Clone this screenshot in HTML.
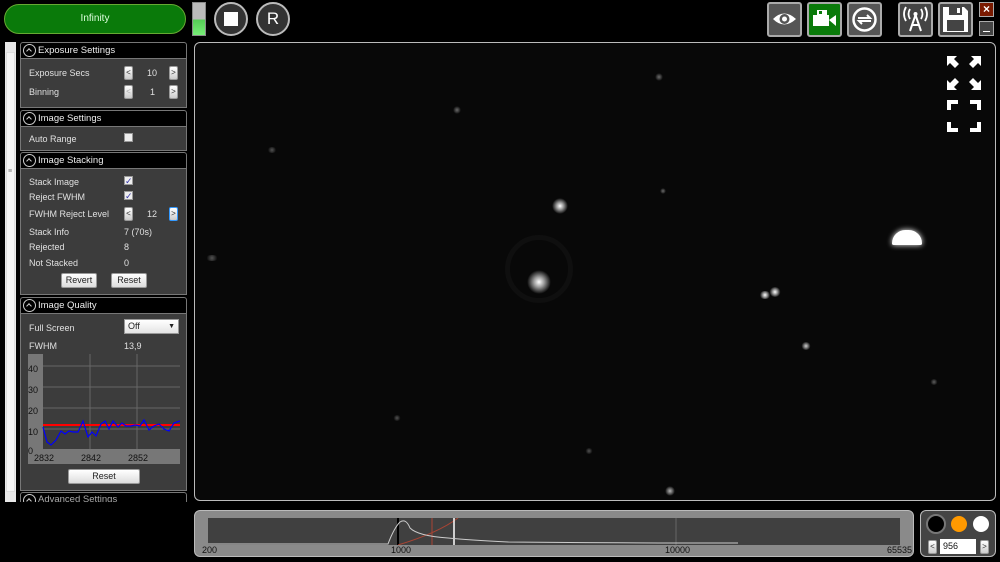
<!DOCTYPE html><html><head><style>
*{box-sizing:border-box;margin:0;padding:0}
body{width:1000px;height:562px;background:#000;position:relative;overflow:hidden;font-family:"Liberation Sans",sans-serif;font-size:9px;color:#ddd}
.a{position:absolute}
.hdr{position:absolute;left:20px;width:167px;height:17px;background:#000;border:1px solid #777;border-radius:3px 3px 0 0;color:#eee;font-size:9.5px;line-height:15px;padding-left:17px}
.hdr:before{content:"";position:absolute;left:2px;top:1px;width:11px;height:11px;border:1px solid #ccc;border-radius:50%}
.hdr:after{content:"";position:absolute;left:6px;top:6px;width:3px;height:3px;border-left:1px solid #ccc;border-top:1px solid #ccc;transform:rotate(45deg)}
.body{position:absolute;left:20px;width:167px;background:#3c3c3c;border:1px solid #777;border-top:none}
.l{position:absolute;left:8px;font-size:9px;color:#e0e0e0}
.v{position:absolute;font-size:9px;color:#e0e0e0}
.sb{position:absolute;width:9px;height:14px;background:linear-gradient(#fff,#ccc);border:1px solid #999;border-radius:2px;color:#333;font-size:8px;text-align:center;line-height:12px}
.cb{position:absolute;width:9px;height:9px;background:#eee;border:1px solid #999;color:#33a;font-size:9px;line-height:8px;text-align:center}
.btn{position:absolute;height:15px;background:linear-gradient(#fff,#ddd);border:1px solid #999;border-radius:2px;color:#222;font-size:9px;text-align:center;line-height:13px}
.tb{position:absolute;top:2px;width:35px;height:35px;background:#555;border:2px solid #aaa;border-radius:3px}
.star{position:absolute;border-radius:50%;background:radial-gradient(circle,#fff 0,rgba(255,255,255,.6) 30%,rgba(255,255,255,0) 70%)}
</style></head><body>
<div class="a" style="left:4px;top:4px;width:182px;height:30px;background:#0a7a0a;border:1px solid #6a3;border-radius:15px;text-align:center;line-height:28px;font-size:10px;color:#dfd">Infinity</div>
<div class="a" style="left:192px;top:2px;width:14px;height:34px;background:linear-gradient(#bbb 0,#bbb 52%,#5c5 52%,#7e7 100%);border:1px solid #888"></div>
<div class="a" style="left:214px;top:2px;width:34px;height:34px;border:2px solid #bbb;border-radius:50%;background:#333"><div class="a" style="left:8px;top:8px;width:14px;height:14px;background:#fff"></div></div>
<div class="a" style="left:256px;top:2px;width:34px;height:34px;border:2px solid #bbb;border-radius:50%;background:#333;color:#fff;font-size:17px;text-align:center;line-height:30px">R</div>
<div class="tb" style="left:767px"><svg width="31" height="31"><path d="M4 15Q15 4 27 15Q15 26 4 15Z" fill="#fff"/><circle cx="15.5" cy="15" r="5" fill="#555"/><circle cx="15.5" cy="15" r="2.5" fill="#fff"/></svg></div>
<div class="tb" style="left:807px;background:#0a7a0a"><svg width="31" height="31"><rect x="4" y="11" width="16" height="11" fill="#fff"/><rect x="8" y="6" width="10" height="5" fill="#fff"/><rect x="10" y="7" width="3" height="3" fill="#0a7a0a"/><path d="M20 16L27 11V22Z" fill="#fff"/></svg></div>
<div class="tb" style="left:847px"><svg width="31" height="31"><circle cx="15.5" cy="15.5" r="11" fill="none" stroke="#fff" stroke-width="2.5"/><path d="M9 14h12l-3-3M22 17H10l3 3" fill="none" stroke="#fff" stroke-width="2"/></svg></div>
<div class="tb" style="left:898px;background:#444"><svg width="31" height="31"><path d="M10 27L15.5 11L21 27M12 21h7" fill="none" stroke="#fff" stroke-width="2"/><circle cx="15.5" cy="10" r="2" fill="#fff"/><path d="M10 5Q7 10 10 15M21 5Q24 10 21 15M6 3Q2 10 6 17M25 3Q29 10 25 17" fill="none" stroke="#fff" stroke-width="1.8"/></svg></div>
<div class="tb" style="left:938px;background:#444"><svg width="31" height="31"><path d="M3 3H24L28 7V28H3Z" fill="#fff"/><rect x="9" y="3" width="13" height="8" fill="#444"/><rect x="17" y="4" width="3" height="5" fill="#fff"/><rect x="7" y="16" width="17" height="11" fill="#444"/></svg></div>
<div class="a" style="left:979px;top:2px;width:15px;height:15px;background:#7a1a00;border:1px solid #aaa;color:#fff;font-size:12px;font-weight:bold;text-align:center;line-height:13px">×</div>
<div class="a" style="left:979px;top:21px;width:15px;height:15px;background:#444;border:1px solid #aaa"><div class="a" style="left:3px;top:9px;width:7px;height:1px;background:#fff"></div></div>
<div class="a" style="left:5px;top:42px;width:11px;height:460px;background:#e8e8e8"><div class="a" style="left:1px;top:10px;width:9px;height:440px;background:#f4f4f4;border:1px solid #ddd"></div><div class="a" style="left:3px;top:126px;color:#777;font-size:7px">≡</div></div>
<div class="hdr" style="top:42px">Exposure Settings</div>
<div class="body" style="top:59px;height:49px">
<div class="l" style="top:9px">Exposure Secs</div><div class="sb" style="left:103px;top:7px">&lt;</div><div class="v" style="left:126px;top:9px">10</div><div class="sb" style="left:148px;top:7px">&gt;</div>
<div class="l" style="top:28px">Binning</div><div class="sb" style="left:103px;top:26px;color:#aaa">&lt;</div><div class="v" style="left:129px;top:28px">1</div><div class="sb" style="left:148px;top:26px">&gt;</div></div>
<div class="hdr" style="top:110px">Image Settings</div>
<div class="body" style="top:127px;height:24px"><div class="l" style="top:7px">Auto Range</div><div class="cb" style="left:103px;top:6px"></div></div>
<div class="hdr" style="top:152px">Image Stacking</div>
<div class="body" style="top:169px;height:126px">
<div class="l" style="top:8px">Stack Image</div><div class="cb" style="left:103px;top:7px">✓</div>
<div class="l" style="top:23px">Reject FWHM</div><div class="cb" style="left:103px;top:22px">✓</div>
<div class="l" style="top:40px">FWHM Reject Level</div><div class="sb" style="left:103px;top:38px">&lt;</div><div class="v" style="left:126px;top:40px">12</div><div class="sb" style="left:148px;top:38px;border-color:#39f">&gt;</div>
<div class="l" style="top:58px">Stack Info</div><div class="v" style="left:103px;top:58px">7 (70s)</div>
<div class="l" style="top:73px">Rejected</div><div class="v" style="left:103px;top:73px">8</div>
<div class="l" style="top:89px">Not Stacked</div><div class="v" style="left:103px;top:89px">0</div>
<div class="btn" style="left:40px;top:104px;width:36px">Revert</div><div class="btn" style="left:90px;top:104px;width:36px">Reset</div></div>
<div class="hdr" style="top:297px">Image Quality</div>
<div class="body" style="top:314px;height:177px">
<div class="l" style="top:9px">Full Screen</div>
<div class="a" style="left:103px;top:5px;width:55px;height:15px;background:linear-gradient(#fff,#e4e4e4);border:1px solid #999;color:#222;padding-left:3px;line-height:13px">Off<span style="position:absolute;right:3px;font-size:7px">▼</span></div>
<div class="l" style="top:27px">FWHM</div><div class="v" style="left:103px;top:27px">13,9</div>
<svg class="a" style="left:7px;top:40px" width="152" height="110"><rect x="0" y="0" width="152" height="110" fill="#3c3c3c"/><rect x="0" y="0" width="15" height="110" fill="#777"/><rect x="0" y="95" width="152" height="15" fill="#777"/>
<g stroke="#666" stroke-width="1"><line x1="15" y1="12" x2="152" y2="12"/><line x1="15" y1="33" x2="152" y2="33"/><line x1="15" y1="54" x2="152" y2="54"/><line x1="15" y1="75" x2="152" y2="75"/><line x1="62" y1="0" x2="62" y2="95"/><line x1="109" y1="0" x2="109" y2="95"/></g>
<line x1="15" y1="71" x2="152" y2="71" stroke="#f00" stroke-width="2"/>
<polyline fill="none" stroke="#00f" stroke-width="1.2" points="15,73 19,88 23,91 28,86 33,77 37,80 41,77 45,78 50,78 55,67 60,83 64,78 68,82 73,70 77,67 81,75 85,67 90,73 94,69 98,72 103,72 107,71 112,72 116,66 121,76 126,72 131,70 136,75 141,77 146,69 152,67"/>
<g fill="#111" font-size="9" font-family="Liberation Sans"><text x="0" y="18">40</text><text x="0" y="39">30</text><text x="0" y="60">20</text><text x="0" y="81">10</text><text x="0" y="100">0</text><text x="6" y="107">2832</text><text x="53" y="107">2842</text><text x="100" y="107">2852</text></g></svg>
<div class="btn" style="left:47px;top:155px;width:72px">Reset</div></div>
<div class="hdr" style="top:492px;height:12px;line-height:13px;color:#aaa">Advanced Settings</div>
<div class="a" style="left:0;top:502px;width:192px;height:60px;background:#000"></div>
<div class="a" style="left:194px;top:42px;width:802px;height:459px;background:#080808;border:1px solid #bbb;border-radius:6px;overflow:hidden">
<div class="a" style="left:310px;top:192px;width:68px;height:68px;border-radius:50%;border:5px solid rgba(255,255,255,.03)"></div>
<div class="star" style="left:332px;top:227px;width:24px;height:24px"></div>
<div class="star" style="left:357px;top:155px;width:16px;height:16px"></div>
<div class="a" style="left:697px;top:187px;width:30px;height:15px;background:#fff;border-radius:15px 15px 2px 2px;box-shadow:0 0 6px #fff"></div>
<div class="star" style="left:574px;top:244px;width:12px;height:10px"></div>
<div class="star" style="left:564px;top:248px;width:12px;height:8px"></div>
<div class="star" style="left:606px;top:299px;width:10px;height:8px;opacity:.8"></div>
<div class="star" style="left:470px;top:443px;width:10px;height:10px;opacity:.7"></div>
<div class="star" style="left:460px;top:30px;width:8px;height:8px;opacity:.4"></div>
<div class="star" style="left:258px;top:63px;width:8px;height:8px;opacity:.4"></div>
<div class="star" style="left:10px;top:212px;width:14px;height:6px;opacity:.3"></div>
<div class="star" style="left:72px;top:104px;width:10px;height:6px;opacity:.3"></div>
<div class="star" style="left:465px;top:145px;width:6px;height:6px;opacity:.4"></div>
<div class="star" style="left:735px;top:336px;width:8px;height:6px;opacity:.35"></div>
<div class="star" style="left:390px;top:405px;width:8px;height:6px;opacity:.3"></div>
<div class="star" style="left:198px;top:372px;width:8px;height:6px;opacity:.3"></div>
<svg class="a" style="left:751px;top:12px" width="36" height="78" fill="#fff"><path d="M1 1h10l-3 3 5 5-4 4-5-5-3 3z M35 1H25l3 3-5 5 4 4 5-5 3 3z M1 35h10l-3-3 5-5-4-4-5 5-3-3z M35 35H25l3-3-5-5 4-4 5 5 3-3z"/><path d="M1 45h11v4H5v6H1z M35 45H24v4h7v6h4z M1 77h11v-4H5v-6H1z M35 77H24v-4h7v-6h4z"/></svg>
</div>
<div class="a" style="left:194px;top:510px;width:720px;height:47px;background:#8a8a8a;border:1px solid #bbb;border-radius:6px">
<svg class="a" style="left:13px;top:7px" width="692" height="27"><rect width="692" height="27" fill="#404040"/><line x1="468" y1="0" x2="468" y2="27" stroke="#666"/><line x1="190" y1="0" x2="190" y2="27" stroke="#000" stroke-width="2"/><line x1="224" y1="0" x2="224" y2="27" stroke="#a43"/><path d="M190 27Q230 15 250 0" stroke="#a43" fill="none"/><line x1="246" y1="0" x2="246" y2="27" stroke="#fff" stroke-width="1.5"/><path d="M0 26H180Q186 10 192 4Q198 0 202 10Q210 18 240 20Q260 22 300 24Q400 25 530 25" stroke="#ccc" fill="none"/></svg>
<div class="a" style="left:7px;top:34px;color:#111;font-size:9px">200</div><div class="a" style="left:196px;top:34px;color:#111;font-size:9px">1000</div><div class="a" style="left:470px;top:34px;color:#111;font-size:9px">10000</div><div class="a" style="left:692px;top:34px;color:#111;font-size:9px">65535</div></div>
<div class="a" style="left:920px;top:510px;width:76px;height:47px;background:#444;border:1px solid #bbb;border-radius:6px">
<div class="a" style="left:5px;top:3px;width:20px;height:20px;border-radius:50%;background:#000;border:2px solid #777"></div>
<div class="a" style="left:30px;top:5px;width:16px;height:16px;border-radius:50%;background:#f90"></div>
<div class="a" style="left:52px;top:5px;width:16px;height:16px;border-radius:50%;background:#fff"></div>
<div class="sb" style="left:7px;top:29px">&lt;</div><div class="a" style="left:19px;top:28px;width:36px;height:15px;background:#fff;color:#111;font-size:9px;padding-left:3px;line-height:15px">956</div><div class="sb" style="left:59px;top:29px">&gt;</div></div>
</body></html>
